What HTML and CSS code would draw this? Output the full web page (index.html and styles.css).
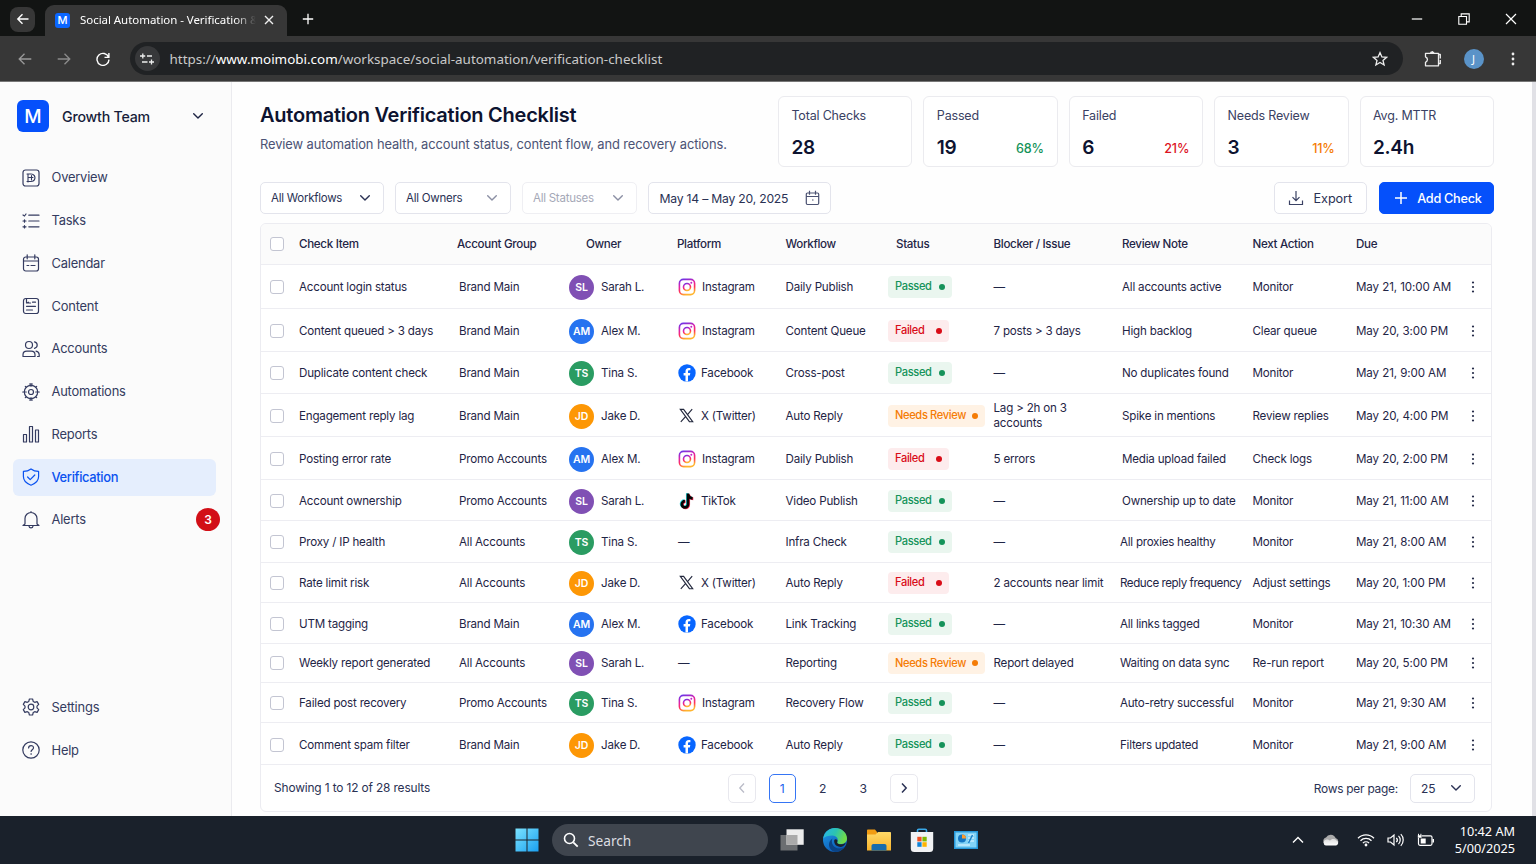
FILE: index.html
```html
<!DOCTYPE html>
<html lang="en">
<head>
<meta charset="utf-8">
<title>Social Automation - Verification</title>
<link rel="stylesheet" href="styles.css">
</head>
<body>
<svg class="defs" width="0" height="0" aria-hidden="true">
  <defs>
    <linearGradient id="ig-g" x1="0.1" y1="0" x2="0.45" y2="1">
      <stop offset="0" stop-color="#6a35e8"/><stop offset="0.4" stop-color="#e01fa8"/><stop offset="0.72" stop-color="#ff3355"/><stop offset="1" stop-color="#ffb52e"/>
    </linearGradient>
    <linearGradient id="win-g" x1="0" y1="0" x2="1" y2="1"><stop offset="0" stop-color="#7be3ff"/><stop offset="1" stop-color="#1a9ff0"/></linearGradient>
    <linearGradient id="edge-a" x1="0" y1="0" x2="1" y2="0.3"><stop offset="0" stop-color="#26b4ec"/><stop offset="0.55" stop-color="#2cc3b0"/><stop offset="1" stop-color="#6fdc4a"/></linearGradient>
    <linearGradient id="edge-b" x1="0" y1="0" x2="0.6" y2="1"><stop offset="0" stop-color="#1f9de8"/><stop offset="1" stop-color="#0c59b5"/></linearGradient>
    <linearGradient id="fold-g" x1="0" y1="0" x2="0" y2="1"><stop offset="0" stop-color="#ffd968"/><stop offset="1" stop-color="#f8b42c"/></linearGradient>
    <linearGradient id="cloud-g" x1="0" y1="0" x2="0" y2="1"><stop offset="0" stop-color="#dcdcdc"/><stop offset="1" stop-color="#ffffff"/></linearGradient>
  </defs>
  <symbol id="instagram" viewBox="0 0 18 18"><rect x="1.400" y="1.400" width="15.200" height="15.200" rx="4" fill="none" stroke="url(#ig-g)" stroke-width="1.600"/><circle cx="9" cy="9" r="3.500" fill="none" stroke="url(#ig-g)" stroke-width="1.600"/><circle cx="13.300" cy="4.700" r="1" fill="#c321c8"/></symbol>
  <symbol id="facebook" viewBox="0 0 18 18"><circle cx="9" cy="9" r="8.700" fill="#0866ff"/><path d="M7.500 17.600v-6H5.600V9h1.900V7.500c0-2.400 1.100-3.600 3.400-3.600.6 0 1.100.1 1.500.2v2.200h-1.100c-1 0-1.300.5-1.300 1.300V9h2.300l-.5 2.600H10v6z" fill="#fff"/></symbol>
  <symbol id="xlogo" viewBox="0 0 15 15"><path d="M1.300 1.300h3.300l9.100 12.400h-3.300zM13.200 1.200 8.500 6.600M6.500 8.600 1.800 13.800" fill="none" stroke="#23283d" stroke-width="1.150"/></symbol>
  <symbol id="tiktok" viewBox="0 0 18 18"><g fill="none" stroke-width="2.700"><path d="M9.300 1.200v10.600a3.100 3.100 0 1 1-3.100-3.100M9.300 2.200c.5 2.300 2 3.600 4.600 3.800" stroke="#25d9e2"/><path d="M10.700 2.200v10.600a3.100 3.100 0 1 1-3.100-3.100M10.700 3c.5 2.300 2 3.600 4.600 3.800" stroke="#fe2c55"/><path d="M10 1.600v10.700A3.100 3.100 0 1 1 6.900 9.200M10 2.500c.5 2.300 2 3.600 4.600 3.800" stroke="#050505"/></g></symbol>
  <symbol id="more" viewBox="0 0 4 14"><g fill="#252b48"><circle cx="2" cy="2.500" r="1.100"/><circle cx="2" cy="7" r="1.100"/><circle cx="2" cy="11.500" r="1.100"/></g></symbol>
  <symbol id="chev" viewBox="0 0 12 8"><path d="M1.700 1.700 6 6l4.300-4.300" fill="none" stroke="currentColor" stroke-width="1.400" stroke-linecap="round" stroke-linejoin="round"/></symbol>
</svg>

<header class="browser">
  <div class="tabstrip">
    <div class="tab-back"><svg width="14" height="14" viewBox="0 0 14 14"><path d="M12.500 7H2M6.500 2.300 1.800 7l4.700 4.700" fill="none" stroke="#fff" stroke-width="1.400"/></svg></div>
    <div class="tab">
      <span class="favicon">M</span>
      <span class="tab-title">Social Automation - Verification &amp;</span>
      <svg class="tab-close" width="10" height="10" viewBox="0 0 10 10"><path d="M1 1l8 8M9 1 1 9" stroke="#f0f0f0" stroke-width="1.400"/></svg>
    </div>
    <svg class="tab-new" width="12" height="12" viewBox="0 0 12 12"><path d="M6 .8v10.400M.8 6h10.400" stroke="#fff" stroke-width="1.300"/></svg>
    <div class="win-ctl">
      <svg width="12" height="12" viewBox="0 0 12 12"><path d="M.8 6h10.400" stroke="#fff" stroke-width="1.200"/></svg>
      <svg width="12" height="12" viewBox="0 0 12 12"><path d="M.8 3.500h7.700v7.700H.8zM3.200 3.200V.9h8v8H8.800" fill="none" stroke="#fff" stroke-width="1.100"/></svg>
      <svg width="12" height="12" viewBox="0 0 12 12"><path d="M1 1l10 10M11 1 1 11" stroke="#fff" stroke-width="1.200"/></svg>
    </div>
  </div>
  <div class="toolbar">
    <svg width="14" height="14" viewBox="0 0 14 14"><path d="M13.300 7H1.200M6.500 1.700 1.200 7l5.300 5.300" fill="none" stroke="#999" stroke-width="1.300"/></svg>
    <svg width="14" height="14" viewBox="0 0 14 14"><path d="M.7 7h12.100M7.500 1.700 12.800 7l-5.300 5.300" fill="none" stroke="#8b8b8b" stroke-width="1.300"/></svg>
    <svg width="14" height="14" viewBox="0 0 14 14"><path d="M12.600 5.200A6 6 0 1 0 13 7.600M12.900 1v4.400H8.500" fill="none" stroke="#fff" stroke-width="1.400"/></svg>
    <div class="address">
      <span class="site-btn"><svg width="14" height="12" viewBox="0 0 14 12"><path d="M0 3h5.200M2.800.5v5M7 3h5M2 9h5.500M9 9h5M11.500 6.500v5" fill="none" stroke="#eee" stroke-width="1.300"/></svg></span>
      <span class="url">https://<b>www.moimobi.com</b>/workspace/social-automation/verification-checklist</span>
      <svg class="star" width="16" height="16" viewBox="0 0 16 16"><path d="m8 1.600 1.900 4.300 4.700.4-3.600 3.100 1.100 4.600L8 11.500 3.900 14 5 9.400 1.400 6.300l4.700-.4z" fill="none" stroke="#eee" stroke-width="1.300"/></svg>
    </div>
    <svg class="ext" width="18" height="18" viewBox="0 0 18 18"><path d="M1.500 3.300h13v12.500h-13v-3.500c2.600-1.200 2.600-4.300 0-5.500zM6.200 2.500h4M8.200 1v2M14.500 4.500h1.800v4M14.500 13.500h1.800v-3.500" fill="none" stroke="#eee" stroke-width="1.300" stroke-linejoin="round"/></svg>
    <span class="profile">J</span>
    <svg class="kebab" width="4" height="14" viewBox="0 0 4 14"><g fill="#eee"><circle cx="2" cy="2" r="1.400"/><circle cx="2" cy="7" r="1.400"/><circle cx="2" cy="12" r="1.400"/></g></svg>
  </div>
</header>

<div class="app">
  <aside class="sidebar">
    <div class="team"><span class="logo">M</span><span class="team-name">Growth Team</span><svg class="chev" width="12" height="8"><use href="#chev"/></svg></div>
    <nav class="nav">
      <a class="nav-item"><svg viewBox="0 0 18 18"><rect x="1" y="1" width="16" height="16" rx="2.500"/><path d="M6 5v8M5 5h4.500M6 8.500h5M5 12.500h4.500M9.500 6.500v4.500M10.500 5.300c3.300 1.200 3.300 5.800 0 7" stroke-width="1.100"/></svg>Overview</a>
      <a class="nav-item"><svg viewBox="0 0 18 18"><path d="M6.800 3.200H17M6.800 9H17M6.800 14.800H17M1 3l1.500 1L4 2M1 9h3M2.500 7.800v2.400M1 14.800h3M2.500 13.600V16"/></svg>Tasks</a>
      <a class="nav-item"><svg viewBox="0 0 18 18"><rect x="1.500" y="3" width="15" height="14" rx="2.200"/><path d="M1.500 7h15M5.200.8v4M12.800.8v4M5 11.500h1.800M9 11.500h4"/></svg>Calendar</a>
      <a class="nav-item"><svg viewBox="0 0 18 18"><rect x="1.500" y="1.500" width="15" height="15" rx="2.200"/><path d="M4.500 1.500V6l2-.8M4.500 6h4M10.500 5.200h3M4.500 9.300h9M4.500 13h6"/></svg>Content</a>
      <a class="nav-item"><svg viewBox="0 0 18 18"><circle cx="7" cy="5" r="3.500"/><path d="M1 16.500v-1.700c0-2.300 1.700-3.600 3.800-3.600h4.400c2.100 0 3.800 1.300 3.800 3.600v1.700zM12.500 1.800c3.600.7 3.600 5.800 0 6.500M14 11.200c2 .4 3.200 1.700 3.200 3.600v1.700h-1.700"/></svg>Accounts</a>
      <a class="nav-item"><svg viewBox="0 0 18 18"><circle cx="9" cy="9" r="6.700"/><circle cx="9" cy="9" r="2.500"/><path d="M9 .7v2.600M9 14.700v2.600M.7 9h3.600M13.700 9h3.600M7.500 1h3M7.500 17h3M3.300 3.300l.9.900M13.800 13.800l.9.900M14.700 3.300l-.9.900M4.200 13.800l-.9.900"/></svg>Automations</a>
      <a class="nav-item"><svg viewBox="0 0 18 18"><path d="M1.500 9.500h3V17h-3zM7.500 1.500h3V17h-3zM13.500 5h3v12h-3z"/></svg>Reports</a>
      <a class="nav-item active"><svg viewBox="0 0 18 18"><path d="M9 .9c2.300 1.700 4.900 2.400 7.600 2.500v5.200c0 4-2.900 7-7.600 8.600-4.700-1.600-7.600-4.600-7.600-8.600V3.400C4.100 3.300 6.700 2.600 9 .9zM5.600 9l2.600 2.600L12.800 7"/></svg>Verification</a>
      <a class="nav-item"><svg viewBox="0 0 18 18"><path d="M3 13V7.500a6 6 0 0 1 12 0V13l2 1.500H1zM7 15.200c.3 2.300 3.700 2.300 4 0M9 1.500V.6"/></svg>Alerts<span class="badge">3</span></a>
    </nav>
    <nav class="nav nav-bottom">
      <a class="nav-item"><svg viewBox="0 0 18 18"><circle cx="9" cy="9" r="2.800"/><path d="M7.400 1h3.200l.6 2.400 1.500.9 2.400-.7 1.600 2.800L15 8.100v1.800l1.700 1.700-1.600 2.800-2.400-.7-1.500.9-.6 2.400H7.400l-.6-2.400-1.500-.9-2.400.7-1.600-2.800L3 9.900V8.100L1.300 6.400l1.600-2.800 2.400.7 1.500-.9z"/></svg>Settings</a>
      <a class="nav-item"><svg viewBox="0 0 18 18"><circle cx="9" cy="9" r="8.200"/><path d="M6.600 7c0-3.200 5-3.100 4.900-.2 0 1.900-2.400 2-2.400 3.700M9.100 12.700v.6"/></svg>Help</a>
    </nav>
  </aside>

  <main class="main">
    <section class="head">
      <div class="titles"><h1>Automation Verification Checklist</h1><p>Review automation health, account status, content flow, and recovery actions.</p></div>
      <div class="stats">
        <div class="stat"><span>Total Checks</span><div><strong>28</strong></div></div>
        <div class="stat"><span>Passed</span><div><strong>19</strong><em class="green">68%</em></div></div>
        <div class="stat"><span>Failed</span><div><strong>6</strong><em class="red">21%</em></div></div>
        <div class="stat"><span>Needs Review</span><div><strong>3</strong><em class="orange">11%</em></div></div>
        <div class="stat"><span>Avg. MTTR</span><div><strong>2.4h</strong></div></div>
      </div>
    </section>

    <section class="filters">
      <div class="select s-work">All Workflows<svg class="chev" width="12" height="8"><use href="#chev"/></svg></div>
      <div class="select s-own">All Owners<svg class="chev" width="12" height="8"><use href="#chev"/></svg></div>
      <div class="select s-stat">All Statuses<svg class="chev" width="12" height="8"><use href="#chev"/></svg></div>
      <div class="select s-date">May 14 – May 20, 2025<svg width="15" height="16" viewBox="0 0 15 16"><path d="M2.500 3h10c.7 0 1.200.5 1.200 1.200v9.100c0 .7-.5 1.200-1.200 1.200h-10c-.7 0-1.200-.5-1.200-1.200V4.200C1.300 3.500 1.800 3 2.500 3zM1.300 6.500h12.400M4.500.8v4M10.500.8v4M7 10h1.500" fill="none" stroke="#4b5272" stroke-width="1.200"/></svg></div>
      <div class="btn export"><svg width="16" height="16" viewBox="0 0 16 16"><path d="M8 1v9.500M4.500 7.200 8 10.700l3.500-3.500M1.500 10.500v4h13v-4" fill="none" stroke="#3a4163" stroke-width="1.200"/></svg>Export</div>
      <div class="btn add"><svg width="14" height="14" viewBox="0 0 14 14"><path d="M7 1v12M1 7h12" stroke="#fff" stroke-width="1.500"/></svg>Add Check</div>
    </section>

    <section class="table">
      <div class="row thead"><i class="cb"></i><span>Check Item</span><span class="h-group">Account Group</span><span class="h-owner">Owner</span><span class="h-plat">Platform</span><span>Workflow</span><span class="h-status">Status</span><span>Blocker / Issue</span><span>Review Note</span><span>Next Action</span><span>Due</span><span></span></div>
      <div class="row h44"><i class="cb"></i><span>Account login status</span><span>Brand Main</span><span class="who"><b class="av sl">SL</b>Sarah L.</span><span class="plat wide"><svg><use href="#instagram"/></svg>Instagram</span><span>Daily Publish</span><span><em class="pill ok">Passed</em></span><span>—</span><span>All accounts active</span><span>Monitor</span><span class="due">May 21, 10:00 AM</span><svg class="more"><use href="#more"/></svg></div>
      <div class="row h43"><i class="cb"></i><span>Content queued &gt; 3 days</span><span>Brand Main</span><span class="who"><b class="av am">AM</b>Alex M.</span><span class="plat wide"><svg><use href="#instagram"/></svg>Instagram</span><span>Content Queue</span><span><em class="pill bad">Failed</em></span><span>7 posts &gt; 3 days</span><span>High backlog</span><span>Clear queue</span><span class="due">May 20, 3:00 PM</span><svg class="more"><use href="#more"/></svg></div>
      <div class="row h42"><i class="cb"></i><span>Duplicate content check</span><span>Brand Main</span><span class="who"><b class="av ts">TS</b>Tina S.</span><span class="plat"><svg><use href="#facebook"/></svg>Facebook</span><span>Cross-post</span><span><em class="pill ok">Passed</em></span><span>—</span><span>No duplicates found</span><span>Monitor</span><span class="due">May 21, 9:00 AM</span><svg class="more"><use href="#more"/></svg></div>
      <div class="row h43"><i class="cb"></i><span>Engagement reply lag</span><span>Brand Main</span><span class="who"><b class="av jd">JD</b>Jake D.</span><span class="plat"><svg class="x"><use href="#xlogo"/></svg>X (Twitter)</span><span>Auto Reply</span><span><em class="pill warn">Needs Review</em></span><span>Lag &gt; 2h on 3<br>accounts</span><span>Spike in mentions</span><span>Review replies</span><span class="due">May 20, 4:00 PM</span><svg class="more"><use href="#more"/></svg></div>
      <div class="row h43"><i class="cb"></i><span>Posting error rate</span><span>Promo Accounts</span><span class="who"><b class="av am">AM</b>Alex M.</span><span class="plat wide"><svg><use href="#instagram"/></svg>Instagram</span><span>Daily Publish</span><span><em class="pill bad">Failed</em></span><span>5 errors</span><span>Media upload failed</span><span>Check logs</span><span class="due">May 20, 2:00 PM</span><svg class="more"><use href="#more"/></svg></div>
      <div class="row h41"><i class="cb"></i><span>Account ownership</span><span>Promo Accounts</span><span class="who"><b class="av sl">SL</b>Sarah L.</span><span class="plat"><svg><use href="#tiktok"/></svg>TikTok</span><span>Video Publish</span><span><em class="pill ok">Passed</em></span><span>—</span><span>Ownership up to date</span><span>Monitor</span><span class="due">May 21, 11:00 AM</span><svg class="more"><use href="#more"/></svg></div>
      <div class="row h42"><i class="cb"></i><span>Proxy / IP health</span><span>All Accounts</span><span class="who"><b class="av ts">TS</b>Tina S.</span><span>—</span><span>Infra Check</span><span><em class="pill ok">Passed</em></span><span>—</span><span class="note">All proxies healthy</span><span>Monitor</span><span class="due">May 21, 8:00 AM</span><svg class="more"><use href="#more"/></svg></div>
      <div class="row h40"><i class="cb"></i><span>Rate limit risk</span><span>All Accounts</span><span class="who"><b class="av jd">JD</b>Jake D.</span><span class="plat"><svg class="x"><use href="#xlogo"/></svg>X (Twitter)</span><span>Auto Reply</span><span><em class="pill bad">Failed</em></span><span>2 accounts near limit</span><span class="note tight">Reduce reply frequency</span><span>Adjust settings</span><span class="due">May 20, 1:00 PM</span><svg class="more"><use href="#more"/></svg></div>
      <div class="row h41"><i class="cb"></i><span>UTM tagging</span><span>Brand Main</span><span class="who"><b class="av am">AM</b>Alex M.</span><span class="plat"><svg><use href="#facebook"/></svg>Facebook</span><span>Link Tracking</span><span><em class="pill ok">Passed</em></span><span>—</span><span class="note">All links tagged</span><span>Monitor</span><span class="due">May 21, 10:30 AM</span><svg class="more"><use href="#more"/></svg></div>
      <div class="row h39"><i class="cb"></i><span>Weekly report generated</span><span>All Accounts</span><span class="who"><b class="av sl">SL</b>Sarah L.</span><span>—</span><span>Reporting</span><span><em class="pill warn">Needs Review</em></span><span>Report delayed</span><span class="note">Waiting on data sync</span><span>Re-run report</span><span class="due">May 20, 5:00 PM</span><svg class="more"><use href="#more"/></svg></div>
      <div class="row h40"><i class="cb"></i><span>Failed post recovery</span><span>Promo Accounts</span><span class="who"><b class="av ts">TS</b>Tina S.</span><span class="plat wide"><svg><use href="#instagram"/></svg>Instagram</span><span>Recovery Flow</span><span><em class="pill ok">Passed</em></span><span>—</span><span class="note">Auto-retry successful</span><span>Monitor</span><span class="due">May 21, 9:30 AM</span><svg class="more"><use href="#more"/></svg></div>
      <div class="row h42 last"><i class="cb"></i><span>Comment spam filter</span><span>Brand Main</span><span class="who"><b class="av jd">JD</b>Jake D.</span><span class="plat"><svg><use href="#facebook"/></svg>Facebook</span><span>Auto Reply</span><span><em class="pill ok">Passed</em></span><span>—</span><span class="note">Filters updated</span><span>Monitor</span><span class="due">May 21, 9:00 AM</span><svg class="more"><use href="#more"/></svg></div>
      <footer class="tfoot">
        <span class="showing">Showing 1 to 12 of 28 results</span>
        <div class="pages">
          <span class="pg box off"><svg width="8" height="12" viewBox="0 0 8 12"><path d="M6 1.500 1.800 6 6 10.500" fill="none" stroke="currentColor" stroke-width="1.300"/></svg></span>
          <span class="pg cur">1</span><span class="pg">2</span><span class="pg">3</span>
          <span class="pg box"><svg width="8" height="12" viewBox="0 0 8 12"><path d="M2 1.500 6.200 6 2 10.500" fill="none" stroke="currentColor" stroke-width="1.500"/></svg></span>
        </div>
        <div class="per"><span>Rows per page:</span><div class="select s-rows">25<svg class="chev" width="12" height="8"><use href="#chev"/></svg></div></div>
      </footer>
    </section>
  </main>
  <div class="scrollbar"></div>
</div>

<footer class="taskbar">
  <div class="apps">
    <svg class="i-win" width="24" height="24" viewBox="0 0 24 24"><path d="M.5.5h11v11H.5zM12.500.5h11v11h-11zM.5 12.500h11v11H.5zM12.500 12.500h11v11h-11z" fill="url(#win-g)"/></svg>
    <div class="search"><svg width="16" height="16" viewBox="0 0 16 16"><circle cx="6.500" cy="6.500" r="5" fill="none" stroke="#fff" stroke-width="1.600"/><path d="m10.300 10.300 4.400 4.400" stroke="#fff" stroke-width="1.800"/></svg>Search</div>
    <svg class="i-view" width="24" height="24" viewBox="0 0 24 24"><path d="M.5 7h17v15.500H.5z" fill="#6b6e71"/><path d="M6.500 1.300h17.200v15.500H6.500z" fill="#ececec"/><path d="M6.500 7h11v9.800h-11z" fill="#aaa"/></svg>
    <svg class="i-edge" width="26" height="26" viewBox="0 0 26 26"><circle cx="13" cy="13" r="12" fill="url(#edge-b)"/><path d="M1.200 11.500C2.400 4.500 7.500 1 13 1c7 0 12 5 12 10.500 0 4-3.300 5.700-6.500 5.700-3 0-4-1.300-3.200-2.500 1.500-2.200-.3-6.200-5-6.200-4 0-7.500 1.300-9.100 3z" fill="url(#edge-a)"/><path d="M10.500 11.500c-2.300 4.500 1.500 11 9 9.800.9-.2 1.900-.5 2.700-1C20 23.500 16.500 25 13 25c-7-2-8-10-2.500-13.500z" fill="#0b4384"/><path d="M15.500 14.300c-1 1.700.6 3 3.200 3 1.900 0 3.900-.6 5.100-1.900-1 3.200-3.700 4.900-6.500 4.400-4.400-.6-5.500-4.200-5-6.700.6-1.500 3.500-1 3.200 1.200z" fill="#1a212b"/></svg>
    <svg class="i-fold" width="26" height="24" viewBox="0 0 26 24"><path d="M1 2.500C1 1.900 1.500 1.500 2 1.500h7l2 2.500v4H1z" fill="#f19c13"/><path d="M1 6.500h8.500L12 4h12c.6 0 1 .4 1 1v17.500H1z" fill="url(#fold-g)"/><path d="M5.500 22.500V18c0-1.200.8-2 2-2h11c1.200 0 2 .8 2 2v4.500z" fill="#166cae"/></svg>
    <svg class="i-store" width="24" height="26" viewBox="0 0 24 26"><path d="M7.500 6V3.500c0-.8.5-1.300 1.300-1.300h6.400c.8 0 1.300.5 1.300 1.300V6" fill="none" stroke="#39a8e8" stroke-width="1.600"/><path d="M.8 5h22.400v16.500a3.500 3.500 0 0 1-3.500 3.500H4.300A3.500 3.500 0 0 1 .8 21.500z" fill="#f1f2f4"/><path d="M7.300 9.800h4.300v4.600H7.300z" fill="#f25022"/><path d="M12.400 9.800h4.300v4.600h-4.300z" fill="#7fba00"/><path d="M7.300 15.200h4.300v4.600H7.300z" fill="#0f84d8"/><path d="M12.400 15.200h4.300v4.600h-4.300z" fill="#ffb300"/></svg>
    <svg class="i-panel" width="24" height="20" viewBox="0 0 24 20"><path d="M0 1h24v18H0z" fill="#2698da"/><path d="M1.500 2.500h21v15h-21z" fill="#82d3f6"/><circle cx="8" cy="8.500" r="4" fill="#1376c4"/><path d="M8 8.500v-4a4 4 0 0 1 4 4z" fill="#ff9b2c"/><path d="M14 5h6M14 8h6M14 11h6M4 15h12" stroke="#e9f9ff" stroke-width="1.200"/><path d="m14.500 13 4-8" stroke="#1d83cb" stroke-width="1.500"/></svg>
  </div>
  <div class="tray">
    <svg width="12" height="8" viewBox="0 0 12 8"><path d="M1 6.500 6 1.500l5 5" fill="none" stroke="#fff" stroke-width="1.400"/></svg>
    <svg class="t-cloud" width="18" height="12" viewBox="0 0 18 12"><path d="M4.500 11A3.800 3.800 0 0 1 4 3.600 5.300 5.300 0 0 1 13.600 4 3.700 3.700 0 0 1 14 11z" fill="#aaa"/><path d="M4 11.500a3 3 0 0 1 .2-5.900c2-.4 3 .6 3.800 1 1-1.400 2.500-2 4-1.600 1.300.2 2 .8 2.500 1.500a2.600 2.600 0 0 1-.3 5z" fill="url(#cloud-g)"/></svg>
    <svg class="t-wifi" width="18" height="14" viewBox="0 0 18 14"><g fill="none" stroke="#fff" stroke-width="1.300"><path d="M1 5.200a11.300 11.300 0 0 1 16 0M3.500 7.700a7.800 7.800 0 0 1 11 0M5.900 10.100a4.400 4.400 0 0 1 6.200 0"/></g><circle cx="9" cy="12" r="1.400" fill="#fff"/></svg>
    <svg class="t-snd" width="18" height="14" viewBox="0 0 18 14"><path d="M1 5v4h2.500l3.500 3V2L3.500 5zM9.300 4.800c1.200 1.200 1.200 3.200 0 4.400M11.500 2.900c2.300 2.300 2.300 5.900 0 8.200M13.800 1.200c3.200 3.200 3.200 8.400 0 11.600" fill="none" stroke="#fff" stroke-width="1.200"/></svg>
    <svg class="t-bat" width="18" height="14" viewBox="0 0 18 14"><path d="M5 2.800h8.500c.8 0 1.500.7 1.500 1.500v6.500c0 .8-.7 1.500-1.500 1.500H3c-.8 0-1.500-.7-1.500-1.500V5" fill="none" stroke="#fff" stroke-width="1.200"/><path d="M3.700 5.500h5v5h-5zM15.500 6H17v3.500h-1.500zM.8 2.200h3.800v2.500H.8z" fill="#fff"/><path d="M1.500.8v2M3.900.8v2" stroke="#fff" stroke-width="1"/></svg>
    <div class="clock"><span>10:42 AM</span><span>5/00/2025</span></div>
  </div>
</footer>
</body>
</html>
```
FILE: styles.css
```css
* { box-sizing: border-box; }
body { margin: 0; width: 1536px; height: 864px; overflow: hidden; display: flex; flex-direction: column; background: #fff; color: #1d2343; font-family: Inter, "Liberation Sans", sans-serif; font-size: 12px; }
svg { flex: none; display: block; }
.defs { position: absolute; }
h1, p { margin: 0; }
b, i, em { font-style: normal; font-weight: inherit; }

/* Browser chrome */
.browser { height: 82px; flex: none; font-family: "Noto Sans", sans-serif; background: #373737; border-bottom: 1px solid #777; }
.tabstrip { height: 36px; display: flex; align-items: center; background: #121413; padding-left: 10px; }
.tab-back { width: 25px; height: 25px; border-radius: 8px; background: #373737; display: grid; place-items: center; margin-top: 2px; }
.tab { width: 242px; height: 31px; align-self: flex-end; margin-left: 10px; border-radius: 9px 9px 0 0; background: #373737; display: flex; align-items: center; padding: 0 13px 1px 10px; }
.favicon { width: 15px; height: 15px; border-radius: 3px; background: #0b66ff; color: #fff; font: 500 11px/15px Inter, sans-serif; text-align: center; }
.tab-title { width: 180px; margin-left: 10px; white-space: nowrap; color: #fff; font-size: 11.500px; line-height: 18px; letter-spacing: -0.050px; -webkit-mask-image: linear-gradient(90deg, #000 155px, transparent 176px); mask-image: linear-gradient(90deg, #000 155px, transparent 176px); }
.tab-close { margin-left: 4px; }
.tab-new { margin: 2px 0 0 15px; }
.win-ctl { margin-left: auto; display: flex; gap: 35px; padding: 2px 19px 0 0; }
.toolbar { height: 45px; display: flex; align-items: center; padding: 0 21px 0 17.500px; gap: 25px; }
.address { width: 1273px; height: 33px; flex: none; margin-left: -5px; border-radius: 17px; background: #202224; display: flex; align-items: center; padding: 0 15px 0 5px; }
.site-btn { width: 25px; height: 25px; border-radius: 50%; background: #37383a; display: grid; place-items: center; }
.url { margin-left: 10px; font-size: 13.430px; line-height: 20px; padding-top: 1px; color: #c9c9c9; white-space: nowrap; }
.url b { color: #fff; }
.star { margin-left: auto; }
.ext { margin-left: -4px; }
.profile { width: 20px; height: 20px; border-radius: 50%; background: #5a93c8; color: #fff; font-size: 11px; line-height: 20px; text-align: center; margin-left: -3px; }
.kebab { margin-left: 2px; }

/* App shell */
.app { height: 734px; flex: none; display: flex; background: #fefefe; }
.sidebar { width: 232px; flex: none; background: #fbfbfb; border-right: 1px solid #ebebef; display: flex; flex-direction: column; padding-top: 18px; }
.team { display: flex; align-items: center; height: 32px; padding: 0 27px 0 17px; }
.logo { width: 32px; height: 32px; border-radius: 6px; background: #0550fb; color: #fff; font-size: 19px; font-weight: 500; line-height: 33px; text-align: center; }
.team-name { margin-left: 13px; font-size: 14.200px; font-weight: 500; letter-spacing: -0.220px; color: #171d3a; }
.team .chev { margin-left: auto; }
.nav { display: flex; flex-direction: column; gap: 5.750px; padding: 27.300px 15px 0 13px; }
.nav-item { display: flex; align-items: center; height: 37px; border-radius: 6px; padding-left: 9px; gap: 11.500px; font-size: 12.900px; color: #343b60; letter-spacing: -0.200px; line-height: 17px; }
.nav-item svg { width: 18px; height: 18px; fill: none; stroke: currentColor; stroke-width: 1.200; stroke-linejoin: round; stroke-linecap: round; }
.nav-item.active { background: #e5eefd; color: #0a52f0; font-weight: 500; letter-spacing: -0.340px; }
.badge { width: 24px; height: 23px; border-radius: 50%; background: #d20f17; color: #fff; font-size: 12px; font-weight: 600; line-height: 23px; text-align: center; margin: 0 -4px 0 auto; }
.nav-bottom { margin-top: auto; padding: 0 15px 47.500px 13px; }
.main { width: 1300px; padding: 14px 38px 0 28px; }
.scrollbar { width: 4px; background: #e1e1e6; }

.head { display: flex; justify-content: space-between; height: 71px; }
h1 { font-size: 20px; font-weight: 600; line-height: 26px; letter-spacing: -0.240px; margin-top: 6px; color: #0d1330; }
.titles p { font-size: 12.900px; line-height: 18px; letter-spacing: -0.100px; margin-top: 8px; color: #4c5375; }
.stats { display: grid; grid-template-columns: repeat(5, 134.500px); gap: 10.900px; }
.stat { border: 1px solid #ebebef; border-radius: 6px; padding: 11px 13px 0 12.500px; display: flex; flex-direction: column; background: #fff; font-size: 12.500px; letter-spacing: -0.180px; color: #3a4163; }
.stat > span { line-height: 16px; }
.stat div { display: flex; align-items: center; justify-content: space-between; margin-top: 10px; height: 26px; }
.stat strong { font-size: 19px; font-weight: 600; letter-spacing: -0.300px; color: #0d1330; }
.stat em { font-weight: 500; font-size: 12.600px; padding-top: 3px; }
.green { color: #15935a; } .red { color: #dc1424; } .orange { color: #f57c05; }

.filters { display: flex; gap: 11px; margin-top: 15px; height: 32px; }
.select, .btn { border: 1px solid #e3e4ec; border-radius: 5px; background: #fff; display: flex; align-items: center; justify-content: space-between; white-space: nowrap; color: #2a3154; padding: 0 12px 0 10px; }
.select { font-size: 11.500px; letter-spacing: -0.250px; }
.s-work { width: 124px; } .s-own { width: 116px; } .s-stat { width: 115px; color: #a5a8b7; border-color: #efeff3; }
.s-own .chev, .s-stat .chev { color: #8b8fa4; }
.s-date { width: 183px; font-size: 12.200px; letter-spacing: -0.220px; padding: 0 10.500px; }
.btn { font-size: 12.700px; letter-spacing: -0.100px; }
.export { width: 93px; margin-left: auto; padding: 0 13.500px 0 13px; }
.add { width: 115.500px; margin-left: 1px; background: #0550fb; border-color: #0550fb; color: #fff; font-weight: 500; padding: 0 11.500px 0 14px; letter-spacing: -0.280px; }

/* Checklist table */
.table { width: 1232px; margin-top: 9px; height: 589px; border: 1px solid #ececf1; border-radius: 6px; background: #fff; overflow: hidden; }
.row { display: grid; grid-template-columns: 38px 160px 110px 109px 107.500px 102.500px 105.500px 128.500px 130.500px 103.500px 108px 26px; align-items: center; border-bottom: 1px solid #ededf2; font-size: 11.600px; line-height: 15px; letter-spacing: -0.200px; white-space: nowrap; color: #1f2546; padding-top: 1px; }
.thead { height: 41px; background: #fbfbfb; font-weight: 500; letter-spacing: -0.320px; }
.h-group { margin-left: -2px; } .h-owner { margin-left: 17px; } .h-plat { margin-left: -1px; } .h-status { margin-left: 8px; }
.note { margin-left: -2px; letter-spacing: -0.250px; }
.note.tight { letter-spacing: -0.440px; }
.h44 { height: 44px; } .h43 { height: 43px; padding-top: 2px; } .h42 { height: 42px; } .h41 { height: 41px; padding-top: 2px; } .h40 { height: 40px; } .h39 { height: 39px; }
.last { padding-top: 3px; }
.due { letter-spacing: -0.100px; }
.cb { width: 14px; height: 14px; margin: -1px 0 0 9px; border: 1px solid #c3c5d2; border-radius: 3px; background: #fff; }
.who, .plat { display: flex; align-items: center; }
.who { gap: 7px; }
.av { width: 25px; height: 25px; border-radius: 50%; color: #fff; font-size: 10.500px; font-weight: 600; line-height: 25px; text-align: center; }
.sl { background: #8050b4; } .am { background: #2673f0; } .ts { background: #2a9c62; } .jd { background: #fd9705; }
.plat { gap: 5px; } .plat.wide { gap: 6px; }
.plat svg { width: 18px; height: 18px; margin-top: -1px; }
.plat svg.x { width: 15px; height: 15px; margin: -1px 2px 0 1px; }
.pill { display: inline-flex; align-items: center; justify-content: space-between; height: 22px; border-radius: 4px; padding: 0 7px; font-weight: 500; font-size: 11.100px; letter-spacing: -0.350px; vertical-align: middle; margin-top: -1px; }
.pill::after { content: ""; width: 6px; height: 6px; border-radius: 50%; background: currentColor; }
.ok { width: 64px; background: #eaf6ef; color: #15935a; }
.bad { width: 61px; background: #fdeced; color: #d90d18; }
.warn { width: 97px; background: #fff2e4; color: #f57c05; }
.more { width: 4px; height: 14px; margin: -1px 0 0 6.500px; }
.tfoot { height: 46px; display: grid; grid-template-columns: 467px 1fr auto; align-items: center; color: #2a3154; padding: 0 16px 0 0; }
.showing { padding: 0 0 2px 13px; font-size: 11.900px; letter-spacing: -0.140px; }
.pages { display: flex; gap: 13px; }
.pg { width: 27.500px; height: 29px; display: grid; place-items: center; border-radius: 5px; font-size: 12.200px; }
.box { border: 1px solid #e8e8ee; } .off { color: #b9bbc7; }
.cur { border: 1px solid #3575f5; color: #2060ee; }
.per { display: flex; align-items: center; gap: 12px; font-size: 11.900px; letter-spacing: -0.230px; }
.s-rows { width: 65px; height: 29px; font-size: 12px; letter-spacing: 0; }

/* Taskbar */
.taskbar { height: 48px; flex: none; display: flex; background: #1a212b; font-family: "Noto Sans", sans-serif; color: #fff; }
.apps { display: flex; align-items: center; padding-left: 514.500px; }
.search { width: 216px; height: 32px; margin: 0 12px 0 13.500px; border-radius: 16px; background: #3f454e; display: flex; align-items: center; gap: 9px; padding-left: 11px; font-size: 13.700px; color: #dcdee1; }
.i-edge { margin-left: 18px; } .i-fold { margin-left: 18px; } .i-store { margin-left: 18px; } .i-panel { margin-left: 20px; }
.tray { margin-left: auto; display: flex; align-items: center; padding-right: 21px; }
.t-cloud { margin-left: 18px; } .t-wifi { margin-left: 17px; } .t-snd { margin-left: 12px; } .t-bat { margin-left: 12px; }
.clock { width: 62px; margin-left: 18px; display: flex; flex-direction: column; align-items: flex-end; font-size: 12.700px; line-height: 17px; }
```
